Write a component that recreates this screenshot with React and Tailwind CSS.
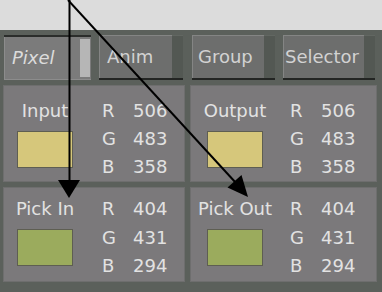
const panels = [
  { label: "Input", color: "bg-[#d6c77b]", rgb: ["506", "483", "358"], pl: "pl-0", gap: "ml-[16px]", pt: "pt-[11px]", h: "h-[97px]" },
  { label: "Output", color: "bg-[#d6c77b]", rgb: ["506", "483", "358"], pl: "pl-[3px]", gap: "ml-[14px]", pt: "pt-[11px]", h: "h-[97px]" },
  { label: "Pick In", color: "bg-[#9bab5d]", rgb: ["404", "431", "294"], pl: "pl-0", gap: "ml-[16px]", pt: "pt-[7px]", h: "h-[95px]" },
  { label: "Pick Out", color: "bg-[#9bab5d]", rgb: ["404", "431", "294"], pl: "pl-[3px]", gap: "ml-[14px]", pt: "pt-[7px]", h: "h-[95px]" },
];

function Tab({ label, width, ml, pl, selected }) {
  if (selected) {
    return (
      <div className={`${width} ${ml} h-[45px] flex flex-col`}>
        <div className="h-[2px] bg-[#2b2d2b]" />
        <div className="flex-1 flex bg-[#7b7b7b] border-l border-b border-[#8c8c8c]">
          <div className={`flex-1 flex items-center ${pl} italic text-[#dcdcdc] leading-none`}>{label}</div>
          <div className="w-[10px] my-[2px] mr-[1px] bg-[#b6b6b6]" />
        </div>
      </div>
    );
  }
  return (
    <div className={`${width} ${ml} h-[45px] flex flex-col`}>
      <div className="flex-1 flex">
        <div className={`flex-1 flex items-center ${pl} bg-[#6d6e6d] border-t border-l border-[#848584] text-[#d2d2d2] leading-none whitespace-nowrap overflow-hidden`}>
          {label}
        </div>
        <div className="w-[11px] bg-[#535853] border-t border-[#626762]" />
      </div>
      <div className="h-[2px] bg-[#232523]" />
    </div>
  );
}

function Panel({ p }) {
  return (
    <div className={`${p.h} ${p.pt} ${p.pl} flex bg-[#7b797b] border border-[#6e6e6e] text-[#e2e2e2]`}>
      <div className="w-[82px] flex flex-col items-center">
        <div className="leading-[28px] whitespace-nowrap">{p.label}</div>
        <div className={`mt-[6px] w-[56px] h-[37px] ${p.color} border border-[#5e5e52]`} />
      </div>
      <div className={`${p.gap} grid grid-cols-[31px_auto] leading-[28px]`}>
        <span>R</span>
        <span>{p.rgb[0]}</span>
        <span>G</span>
        <span>{p.rgb[1]}</span>
        <span>B</span>
        <span>{p.rgb[2]}</span>
      </div>
    </div>
  );
}

export default function App() {
  return (
    <div className="relative w-[382px] h-[292px] overflow-hidden bg-[#5b605b] font-['DejaVu_Sans',sans-serif] text-[18px]">
      <div className="h-[30px] bg-[#dcdcdc]" />

      {/* tabs */}
      <div className="flex mt-[5px]">
        <Tab label="Pixel" width="w-[87px]" ml="ml-[4px]" pl="pl-[7px]" selected />
        <Tab label="Anim" width="w-[84px]" ml="ml-[8px]" pl="pl-[7px]" />
        <Tab label="Group" width="w-[83px]" ml="ml-[9px]" pl="pl-[5px]" />
        <Tab label="Selector" width="w-[92px]" ml="ml-[8px]" pl="pl-[1px]" />
      </div>

      {/* colour panels */}
      <div className="grid grid-cols-[182px_187px] gap-[5px] ml-[3px] mt-[5px]">
        {panels.map((p) => (
          <Panel key={p.label} p={p} />
        ))}
      </div>

      {/* callout arrows */}
      <svg className="absolute inset-0 pointer-events-none" width="382" height="292" viewBox="0 0 382 292">
        <line x1="69.5" y1="0" x2="69.5" y2="184" stroke="#000" strokeWidth="2" />
        <polygon points="58,180 80,180 69,198" fill="#000" />
        <line x1="68" y1="0" x2="236" y2="183" stroke="#000" strokeWidth="2" />
        <polygon points="248,197 227.5,187.5 241.5,175" fill="#000" />
      </svg>
    </div>
  );
}
